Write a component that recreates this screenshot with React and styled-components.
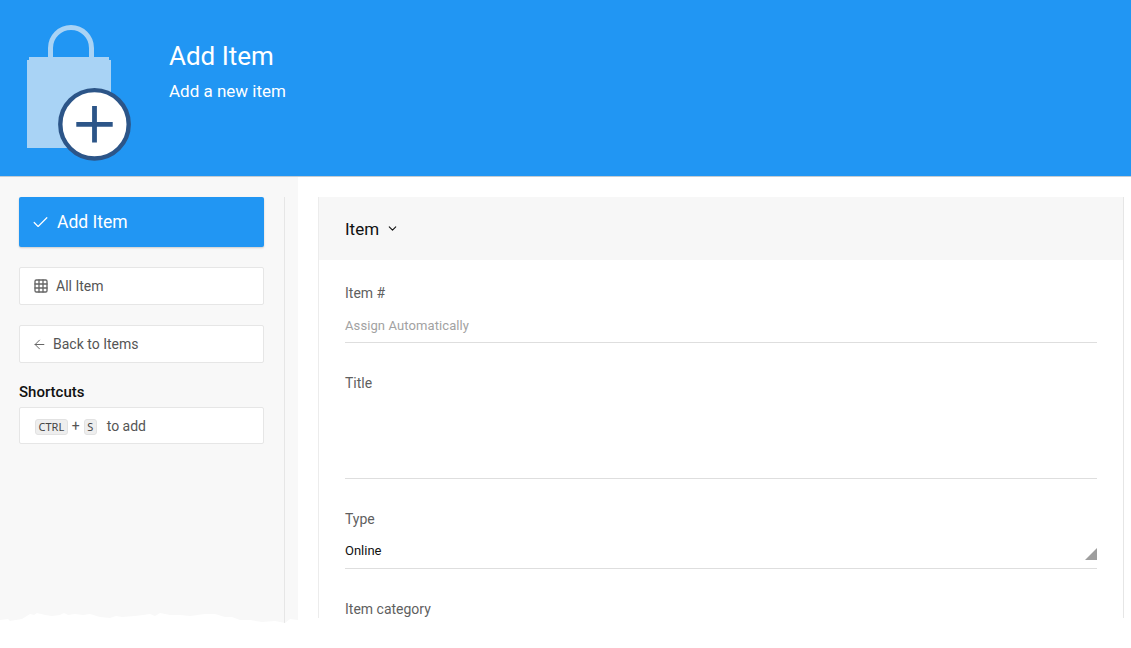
import styled, { createGlobalStyle } from 'styled-components';
import { ArrowLeft, Check, ChevronDown, Grid3x3 } from 'lucide-react';

const tornEdge = '0,7 8,6 10,8 16,7 22,6 30,1 34,2 37,0 45,2 52,3 60,2 64,0 68,2 75,1 83,2 90,1 100,4 110,5 116,3 122,4 135,3 143,2 150,1 155,3 160,0 170,2 180,2 190,3 205,1 215,1 225,4 232,4 240,7 250,7 262,9 275,8 285,10 290,6 298,7 305,5 318,5 318,30 0,30';

function ItemIcon() {
  return (
    <IconSvg viewBox="0 0 104 136">
      <path d="M23.5 34V23a20.5 20.5 0 0 1 41 0v11" fill="none" stroke="#a9d3f5" strokeWidth="5" />
      <path d="M2 32h80v3h2v88H0V35h2z" fill="#a9d3f5" />
      <circle cx="67.5" cy="99.3" r="34.2" fill="#fff" stroke="#2c5588" strokeWidth="4.4" />
      <path d="M49.3 99.3h36.4M67.5 81v36.6" fill="none" stroke="#2c5588" strokeWidth="4.8" />
    </IconSvg>
  );
}

function App() {
  return (
    <Page>
      <GlobalStyle />
      <Header>
        <ItemIcon />
        <Heading>
          <Title>Add Item</Title>
          <Subtitle>Add a new item</Subtitle>
        </Heading>
      </Header>

      <Body>
        <Sidebar>
          <SidebarInner>
            <PrimaryButton>
              <Check size={19} strokeWidth={1.5} />
              Add Item
            </PrimaryButton>
            <LinkButton $gap={7} $inset={13}>
              <Grid3x3 size={16} strokeWidth={2} />
              All Item
            </LinkButton>
            <LinkButton $gap={6} $inset={12}>
              <ArrowLeft size={15} strokeWidth={1.6} />
              Back to Items
            </LinkButton>
            <ShortcutBlock>
              <ShortcutTitle>Shortcuts</ShortcutTitle>
              <ShortcutBox>
                <Key>CTRL</Key>
                <Plus>+</Plus>
                <Key>S</Key>
                <ShortcutText>to add</ShortcutText>
              </ShortcutBox>
            </ShortcutBlock>
          </SidebarInner>
        </Sidebar>

        <Main>
          <Card>
            <CardHeader>
              Item
              <ChevronDown size={13} strokeWidth={2} />
            </CardHeader>
            <CardBody>
              <Field $height={91}>
                <Label>Item #</Label>
                <Placeholder>Assign Automatically</Placeholder>
              </Field>
              <Field $height={137}>
                <Label>Title</Label>
                <TitleInput />
              </Field>
              <Field $height={91}>
                <Label>Type</Label>
                <Value>Online</Value>
                <SelectMark />
              </Field>
              <Field $height={90}>
                <Label>Item category</Label>
              </Field>
            </CardBody>
          </Card>
        </Main>

        <TornEdge viewBox="0 0 318 30" preserveAspectRatio="none">
          <polygon points={tornEdge} fill="#fff" />
        </TornEdge>
      </Body>
    </Page>
  );
}

const GlobalStyle = createGlobalStyle`
  html, body {
    margin: 0;
    padding: 0;
    background: #fff;
  }
  body {
    font-family: Roboto, "Liberation Sans", sans-serif;
  }
`;

const Page = styled.div`
  width: 1131px;
  height: 648px;
  overflow: hidden;
  background: #fff;
`;

const Header = styled.header`
  box-sizing: border-box;
  height: 177px;
  display: flex;
  align-items: flex-start;
  padding: 25px 0 0 27px;
  background: #2196f3;
  border-bottom: 1px solid #c3ccd3;
`;

const IconSvg = styled.svg`
  width: 104px;
  height: 136px;
  flex: none;
`;

const Heading = styled.div`
  margin: 15px 0 0 38px;
  color: #fff;
`;

const Title = styled.div`
  font-size: 26px;
  line-height: 32px;
`;

const Subtitle = styled.div`
  margin-top: 9px;
  font-size: 17px;
  line-height: 20px;
`;

const Body = styled.div`
  position: relative;
  height: 446px;
  display: flex;
  overflow: hidden;
`;

const TornEdge = styled.svg`
  position: absolute;
  left: 0;
  bottom: 0;
  width: 318px;
  height: 30px;
  transform: translateY(20px);
`;

const Sidebar = styled.aside`
  box-sizing: border-box;
  width: 298px;
  flex: none;
  padding-top: 20px;
  background: #f8f8f8;
`;

const SidebarInner = styled.div`
  box-sizing: border-box;
  width: 285px;
  height: 100%;
  display: flex;
  flex-direction: column;
  gap: 20px;
  padding-left: 19px;
  border-right: 1px solid #e6e6e6;
`;

const BaseButton = styled.div`
  box-sizing: border-box;
  width: 245px;
  display: flex;
  align-items: center;
  border-radius: 2px;
`;

const PrimaryButton = styled(BaseButton)`
  height: 50px;
  gap: 7px;
  padding-left: 12px;
  background: #2196f3;
  color: #fff;
  font-size: 17.5px;
  box-shadow: 0 1px 2px rgba(0, 0, 0, 0.18);
`;

const LinkButton = styled(BaseButton)`
  height: 38px;
  gap: ${p => p.$gap}px;
  padding-left: ${p => p.$inset}px;
  background: #fff;
  border: 1px solid #e6e6e6;
  color: #555;
  font-size: 14px;
  svg {
    color: #666;
  }
`;

const ShortcutBlock = styled.div`
  margin-top: 0;
`;

const ShortcutTitle = styled.div`
  font-size: 15px;
  font-weight: 500;
  line-height: 18px;
  color: #111;
`;

const ShortcutBox = styled(BaseButton)`
  height: 37px;
  margin-top: 6px;
  padding-left: 15px;
  background: #fff;
  border: 1px solid #e6e6e6;
  color: #555;
  font-size: 14px;
`;

const Key = styled.span`
  padding: 0 2.5px;
  margin-top: 2px;
  line-height: 14px;
  font-size: 11px;
  color: #444;
  background: #eee;
  border: 1px solid #e2e2e2;
  border-radius: 3px;
  font-family: "Noto Sans", Roboto, sans-serif;
`;

const Plus = styled.span`
  margin: 0 4px;
`;

const ShortcutText = styled.span`
  margin-left: 10px;
`;

const Main = styled.main`
  flex: 1;
  padding: 20px 7px 5px 20px;
`;

const Card = styled.section`
  height: 100%;
  background: #fff;
  border-left: 1px solid #ececec;
  border-right: 1px solid #e6e6e6;
  overflow: hidden;
`;

const CardHeader = styled.div`
  height: 63px;
  display: flex;
  align-items: center;
  gap: 7px;
  padding-left: 26px;
  background: #f7f7f7;
  color: #111;
  font-size: 17px;
`;

const CardBody = styled.div`
  padding: 24px 26px 0;
`;

const Field = styled.div`
  position: relative;
  box-sizing: border-box;
  height: ${p => p.$height}px;
  margin-bottom: -1px;
`;

const Label = styled.div`
  font-size: 14px;
  line-height: 18px;
  color: #5f5f5f;
`;

const InputValue = styled.div`
  position: absolute;
  left: 0;
  right: 0;
  top: 24px;
  height: 34px;
  border-bottom: 1px solid #dedede;
`;

const Placeholder = styled(InputValue)`
  line-height: 36px;
  font-size: 13px;
  letter-spacing: 0.1px;
  color: #a2a2a2;
`;

const Value = styled(InputValue)`
  line-height: 34px;
  font-size: 13px;
  color: #111;
`;

const TitleInput = styled(InputValue)`
  height: 80px;
`;

const SelectMark = styled.div`
  position: absolute;
  right: 0;
  top: 38px;
  width: 12px;
  height: 12px;
  background: #9e9e9e;
  clip-path: polygon(100% 0, 100% 100%, 0 100%);
`;

export default App;
